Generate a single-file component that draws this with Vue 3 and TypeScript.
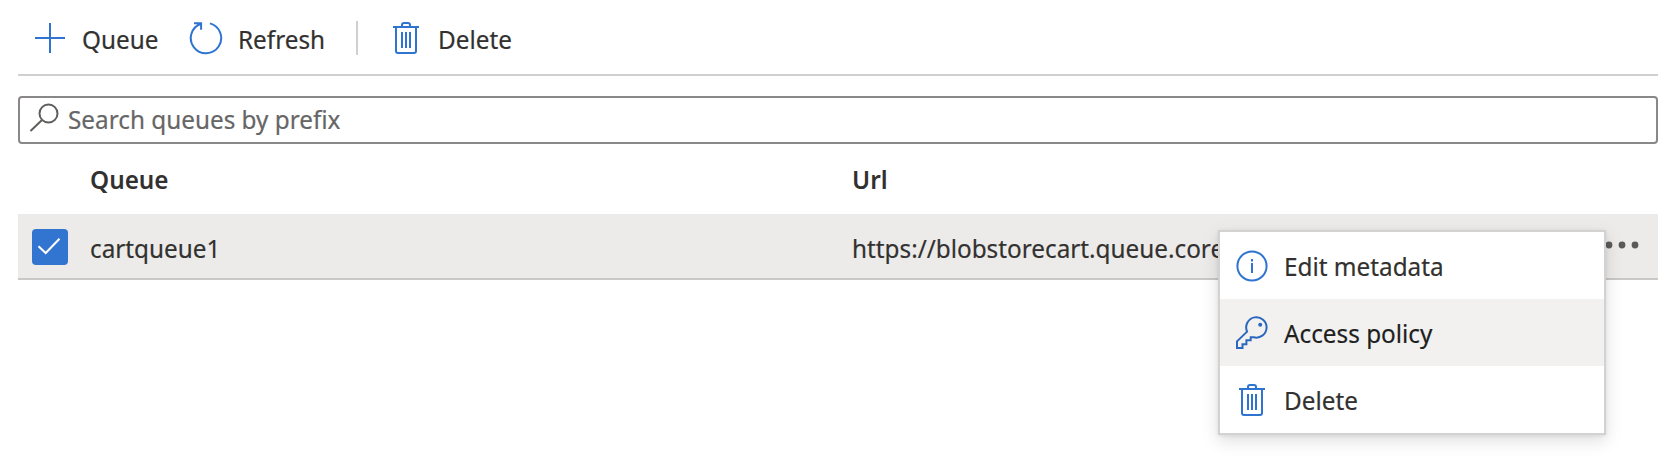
<script setup lang="ts">
interface MenuItem {
  label: string
  icon: 'info' | 'key' | 'trash'
  active?: boolean
}

const menu: MenuItem[] = [
  { label: 'Edit metadata', icon: 'info' },
  { label: 'Access policy', icon: 'key', active: true },
  { label: 'Delete', icon: 'trash' },
]
const queues = [{ name: 'cartqueue1', url: 'https://blobstorecart.queue.core' }]
</script>

<template>
  <main class="page">
    <nav class="toolbar">
      <button class="command add">
        <svg class="icon" viewBox="0 0 34 34"><path d="M17 2v30M2 17h30" /></svg>
        <span class="text">Queue</span>
      </button>
      <button class="command refresh">
        <svg class="icon" viewBox="0 0 34 34">
          <path d="M21 2.4A15.2 15.2 0 1 1 12 2.7M5 2.2h7.1v6.6" />
        </svg>
        <span class="text">Refresh</span>
      </button>
      <i class="separator"></i>
      <button class="command remove">
        <svg class="icon" viewBox="0 0 34 34">
          <path d="M4 6h26M7 6v24q0 2 2 2h16q2 0 2-2V6M13 6V4q0-2 2-2h4q2 0 2 2v2M13 11v16M17 11v16M21 11v16" />
        </svg>
        <span class="text">Delete</span>
      </button>
    </nav>

    <label class="search">
      <svg class="glass" viewBox="0 0 30 30"><circle cx="19.5" cy="10.5" r="9" /><path d="M13 17L1.5 28" /></svg>
      <span class="text">Search queues by prefix</span>
    </label>

    <section class="grid">
      <div class="row head">
        <span></span>
        <span class="text">Queue</span>
        <span class="text">Url</span>
      </div>
      <div v-for="q in queues" :key="q.name" class="row item">
        <span class="check">
          <svg viewBox="0 0 36 36"><path d="M6.5 17.3L13.7 24 27.5 9.7" /></svg>
        </span>
        <span class="text">{{ q.name }}</span>
        <span class="text">{{ q.url }}</span>
        <svg class="dots" viewBox="0 0 36 8">
          <circle cx="5" cy="4" r="3.4" /><circle cx="18" cy="4" r="3.4" /><circle cx="31" cy="4" r="3.4" />
        </svg>
        <div class="menu">
          <div v-for="m in menu" :key="m.label" class="entry" :class="{ active: m.active }">
            <svg class="icon" viewBox="0 0 34 34">
              <template v-if="m.icon === 'info'">
                <circle cx="17" cy="17" r="14.6" />
                <path d="M17 14v10M17 10v2.4" />
              </template>
              <template v-else-if="m.icon === 'key'">
                <path d="M12.1 15.6A10.2 10.2 0 1 1 18.6 21.2H15.7V24.2H11.4V28.2H7.5V32H2V25.4L12.1 15.6z" />
                <circle class="solid" cx="25.2" cy="8.8" r="2" />
              </template>
              <path v-else d="M4 6h26M7 6v24q0 2 2 2h16q2 0 2-2V6M13 6V4q0-2 2-2h4q2 0 2 2v2M13 11v16M17 11v16M21 11v16" />
            </svg>
            <span class="text">{{ m.label }}</span>
          </div>
        </div>
      </div>
    </section>
  </main>
</template>

<style>
body { background: #fff; }
</style>

<style scoped>
.page {
  box-sizing: border-box;
  height: 462px;
  padding: 0 20px 0 18px;
  overflow: hidden;
  color: #323130;
  font: 25.5px/36px "Noto Sans", "Open Sans", sans-serif;
}
.text {
  display: block;
  white-space: nowrap;
  transform: scaleX(0.953);
  transform-origin: 0 50%;
  -webkit-text-stroke: 0.2px currentColor;
}
svg { display: block; fill: none; stroke: #2f74d0; stroke-width: 2; flex: none; }
.toolbar {
  box-sizing: border-box;
  height: 76px;
  border-bottom: 2px solid #d2d0ce;
  display: flex;
  align-items: flex-start;
}
.command {
  display: flex;
  flex: none;
  padding: 0;
  border: 0;
  background: none;
  color: inherit;
  font: inherit;
  text-align: left;
  margin-top: 21px;
}
.icon { width: 34px; height: 34px; }
.add { width: 156px; margin-left: 15px; }
.refresh { width: 167px; }
.command .text { margin-left: 15px; }
.separator { width: 2px; height: 34px; margin-top: 21px; background: #d2d0ce; }
.remove { margin-left: 31px; }
.search {
  box-sizing: border-box;
  display: flex;
  height: 48px;
  margin-top: 20px;
  padding: 5px 9px;
  border: 2px solid #8a8886;
  border-radius: 4px;
  color: #666;
}
.glass { width: 30px; height: 30px; stroke: #605e5c; }
.search .text { margin: -2px 0 0 9px; }
.row { display: grid; grid-template-columns: 72px 762px 1fr; }
.head { height: 70px; font-weight: 600; }
.head .text { margin-top: 17px; -webkit-text-stroke: 0; }
.item {
  position: relative;
  box-sizing: border-box;
  height: 66px;
  background: #ecebe9;
  border-bottom: 2px solid #c8c8c8;
}
.item > .text { margin-top: 16px; }
.check { width: 36px; height: 36px; margin: 15px 0 0 14px; border-radius: 4px; background: #3175d0; }
.check svg { stroke: #fff; }
.dots { position: absolute; top: 27px; right: 18px; width: 36px; height: 8px; fill: #5b5a58; stroke: none; }
.menu {
  position: absolute;
  top: 16px;
  left: 1200px;
  width: 384px;
  border: 2px solid #d2d2d2;
  background: #fff;
  box-shadow: 0 6px 16px rgba(0, 0, 0, 0.13), 0 1px 4px rgba(0, 0, 0, 0.08);
}
.entry { display: flex; height: 67px; padding-left: 15px; }
.entry .icon { margin-top: 17px; }
.entry .text { margin: 16px 0 0 15px; }
.active { background: #f2f1f0; color: #201f1e; }
.active svg { stroke: #2a68bd; }
.active .solid { fill: #2a68bd; stroke: none; }
</style>
